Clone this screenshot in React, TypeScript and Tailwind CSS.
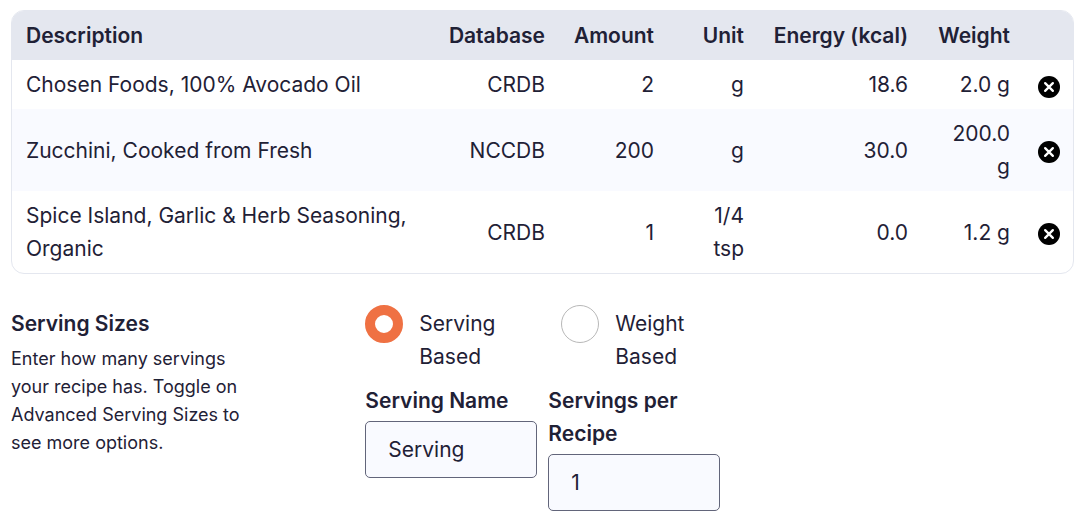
import { useState } from 'react';

const initialIngredients = [
  { id: 1, description: 'Chosen Foods, 100% Avocado Oil', database: 'CRDB', amount: '2', unit: 'g', energy: '18.6', weight: '2.0 g' },
  { id: 2, description: 'Zucchini, Cooked from Fresh', database: 'NCCDB', amount: '200', unit: 'g', energy: '30.0', weight: '200.0 g' },
  { id: 3, description: 'Spice Island, Garlic & Herb Seasoning, Organic', database: 'CRDB', amount: '1', unit: '1/4 tsp', energy: '0.0', weight: '1.2 g' },
];

const servingTypes = [
  { value: 'serving', label: 'Serving Based' },
  { value: 'weight', label: 'Weight Based' },
];

function RemoveIcon() {
  return (
    <svg viewBox="0 0 24 24" className="block h-[22px] w-[22px]" aria-hidden="true">
      <circle cx="12" cy="12" r="12" fill="#000" />
      <path d="M7.8 7.8l8.4 8.4M16.2 7.8l-8.4 8.4" stroke="#fff" strokeWidth="2.5" strokeLinecap="round" />
    </svg>
  );
}

function IngredientsTable() {
  const [ingredients, setIngredients] = useState(initialIngredients);

  return (
    <div className="overflow-hidden rounded-[13px] border border-[#e4e7ef]">
      <table className="w-full table-fixed text-right">
        <colgroup>
          <col />
          <col className="w-[126px]" />
          <col className="w-[109px]" />
          <col className="w-[90px]" />
          <col className="w-[164px]" />
          <col className="w-[102px]" />
          <col className="w-[49px]" />
        </colgroup>
        <thead className="bg-[#e4e7ef]">
          <tr className="*:py-2 *:pr-3.5 *:font-semibold *:whitespace-nowrap">
            <th className="pl-3.5 text-left">Description</th>
            <th>Database</th>
            <th>Amount</th>
            <th>Unit</th>
            <th>Energy (kcal)</th>
            <th>Weight</th>
            <td />
          </tr>
        </thead>
        <tbody>
          {ingredients.map((item) => (
            <tr key={item.id} className="even:bg-[#f9faff]">
              <td className="px-3.5 py-2 text-left">{item.description}</td>
              <td className="px-3.5 py-2">{item.database}</td>
              <td className="px-3.5 py-2">{item.amount}</td>
              <td className="px-3.5 py-2">{item.unit}</td>
              <td className="px-3.5 py-2">{item.energy}</td>
              <td className="px-3.5 py-2">{item.weight}</td>
              <td className="pt-1">
                <button
                  type="button"
                  aria-label={`Remove ${item.description}`}
                  onClick={() => setIngredients(ingredients.filter((i) => i.id !== item.id))}
                  className="mx-auto block cursor-pointer"
                >
                  <RemoveIcon />
                </button>
              </td>
            </tr>
          ))}
        </tbody>
      </table>
    </div>
  );
}

function ServingSizes() {
  const [servingType, setServingType] = useState('serving');

  return (
    <section className="mt-[31px] grid grid-cols-3">
      <div className="pt-0.5">
        <h2 className="font-semibold">Serving Sizes</h2>
        <p className="mt-[5px] max-w-60 text-[18px] leading-7">
          Enter how many servings your recipe has. Toggle on Advanced Serving Sizes to see more options.
        </p>
      </div>

      <div className="col-span-2">
        <div className="flex gap-3">
          {servingTypes.map((type) => (
            <label key={type.value} className="flex w-46 items-start gap-4">
              <input
                type="radio"
                name="servingType"
                value={type.value}
                checked={servingType === type.value}
                onChange={() => setServingType(type.value)}
                className="h-[38px] w-[38px] shrink-0 appearance-none rounded-full border border-[#b8b8b8] bg-white checked:border-[10px] checked:border-[#ef7143]"
              />
              <span className="pt-0.5">{type.label}</span>
            </label>
          ))}
        </div>

        <div className="mt-[11px] flex items-start gap-[11px]">
          <div className="w-43">
            <label htmlFor="servingName" className="block font-semibold">Serving Name</label>
            <input
              id="servingName"
              type="text"
              defaultValue="Serving"
              className="mt-1 block h-[57px] w-full rounded-[5px] border border-[#62657a] bg-[#f9faff] px-[22px]"
            />
          </div>
          <div className="w-43">
            <label htmlFor="servingsPerRecipe" className="block font-semibold">Servings per Recipe</label>
            <input
              id="servingsPerRecipe"
              type="text"
              inputMode="numeric"
              defaultValue="1"
              className="mt-1 block h-[57px] w-full rounded-[5px] border border-[#62657a] bg-[#f9faff] px-[22px]"
            />
          </div>
        </div>
      </div>
    </section>
  );
}

export default function App() {
  return (
    <main className="bg-white pt-2.5 pr-1.5 pb-3 pl-[11px] font-['Inter',sans-serif] text-[21px] leading-[33px] text-[#1f2136]">
      <IngredientsTable />
      <ServingSizes />
    </main>
  );
}
